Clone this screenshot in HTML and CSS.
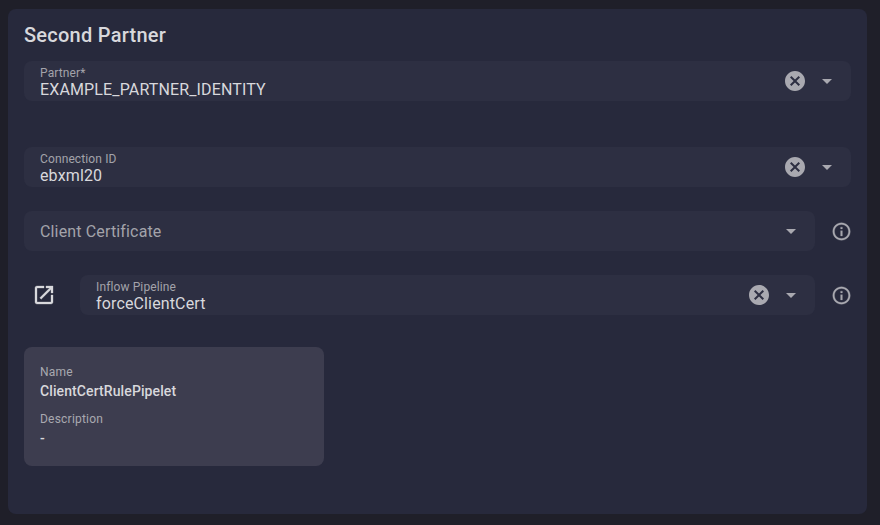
FILE: index.html
```html
<!DOCTYPE html>
<html lang="en">
<head>
<meta charset="utf-8">
<title>Second Partner</title>
<link rel="stylesheet" href="styles.css">
</head>
<body>
<svg width="0" height="0" class="defs" aria-hidden="true">
  <symbol id="cancel" viewBox="0 0 24 24"><path d="M12 2C6.470 2 2 6.470 2 12s4.470 10 10 10 10-4.470 10-10S17.530 2 12 2zm5 13.590L15.590 17 12 13.410 8.410 17 7 15.590 10.590 12 7 8.410 8.410 7 12 10.590 15.590 7 17 8.410 13.410 12 17 15.590z"/></symbol>
  <symbol id="info" viewBox="0 0 24 24"><path d="M11 7h2v2h-2zm0 4h2v6h-2zm1-9C6.480 2 2 6.480 2 12s4.480 10 10 10 10-4.480 10-10S17.520 2 12 2zm0 18c-4.410 0-8-3.590-8-8s3.590-8 8-8 8 3.590 8 8-3.590 8-8 8z"/></symbol>
  <symbol id="open" viewBox="0 0 24 24"><path d="M19 19H5V5h7V3H5c-1.110 0-2 .9-2 2v14c0 1.100.89 2 2 2h14c1.100 0 2-.9 2-2v-7h-2v7zM14 3v2h3.590l-9.830 9.830 1.410 1.410L19 6.410V10h2V3h-7z"/></symbol>
</svg>
<main class="card">
  <h1 class="title">Second Partner</h1>
  <div class="row partner">
    <div class="field">
      <div class="text"><span class="label">Partner*</span><span class="value">EXAMPLE_PARTNER_IDENTITY</span></div>
      <svg class="clear"><use href="#cancel"/></svg>
      <i class="arrow"></i>
    </div>
  </div>
  <div class="row connection">
    <div class="field">
      <div class="text"><span class="label">Connection ID</span><span class="value">ebxml20</span></div>
      <svg class="clear"><use href="#cancel"/></svg>
      <i class="arrow"></i>
    </div>
  </div>
  <div class="row">
    <div class="field">
      <div class="text"><span class="placeholder">Client Certificate</span></div>
      <i class="arrow"></i>
    </div>
    <svg class="info"><use href="#info"/></svg>
  </div>
  <div class="row pipeline">
    <svg class="open"><use href="#open"/></svg>
    <div class="field">
      <div class="text"><span class="label">Inflow Pipeline</span><span class="value">forceClientCert</span></div>
      <svg class="clear"><use href="#cancel"/></svg>
      <i class="arrow"></i>
    </div>
    <svg class="info"><use href="#info"/></svg>
  </div>
  <dl class="details">
    <dt>Name</dt><dd>ClientCertRulePipelet</dd>
    <dt>Description</dt><dd>-</dd>
  </dl>
</main>
</body>
</html>
```
FILE: styles.css
```css
* { box-sizing: border-box; }
body {
  margin: 0;
  padding: 9px 13px 0 8px;
  background: #1f1f29;
  color: #d8d8dc;
  font-family: Roboto, sans-serif;
  overflow: hidden;
}
.defs { position: absolute; }
.card {
  height: 505px;
  padding: 10px 16px;
  border-radius: 8px;
  background: #27293c;
}
.title {
  margin: 0 0 10px;
  font-size: 20px;
  font-weight: 500;
  line-height: 32px;
  letter-spacing: 0.25px;
}
.row {
  display: flex;
  align-items: center;
  margin-bottom: 24px;
}
.partner { margin-bottom: 46px; }
.pipeline { margin-bottom: 32px; }
.field {
  display: flex;
  flex: 1;
  align-items: center;
  height: 40px;
  padding: 0 19px 0 16px;
  border-radius: 8px;
  background: #2d2f42;
}
.text {
  display: flex;
  flex: 1;
  flex-direction: column;
}
.label {
  margin-top: 1px;
  color: #a3a3aa;
  font-size: 12px;
  line-height: 16px;
  letter-spacing: 0.12px;
}
.value {
  font-size: 16px;
  line-height: 17px;
  letter-spacing: 0.14px;
}
.placeholder {
  padding-top: 2px;
  color: #a3a3aa;
  font-size: 16px;
  line-height: 24px;
  letter-spacing: 0.15px;
}
.clear {
  width: 24px;
  height: 24px;
  margin-right: 15px;
  fill: #a9a9b0;
}
.arrow {
  border: 5px solid transparent;
  border-top-color: #a9a9b0;
  border-bottom: 0;
}
.info {
  width: 21px;
  height: 21px;
  margin: 0 -1px 0 16px;
  fill: #a9a9b0;
  stroke: #a9a9b0;
  stroke-width: 0.3px;
}
.open {
  width: 24px;
  height: 24px;
  margin: 0 24px 0 8px;
  fill: #d8d8dc;
  stroke: #d8d8dc;
  stroke-width: 0.3px;
}
.details {
  width: 300px;
  height: 119px;
  margin: 0;
  padding: 17px 16px;
  border-radius: 8px;
  background: #3d3d4f;
}
dt {
  color: #a9a9b0;
  font-size: 12px;
  line-height: 16px;
  letter-spacing: 0.22px;
}
dd {
  margin: 0 0 9px;
  font-size: 14px;
  font-weight: 500;
  line-height: 22px;
  letter-spacing: 0.1px;
}
```
